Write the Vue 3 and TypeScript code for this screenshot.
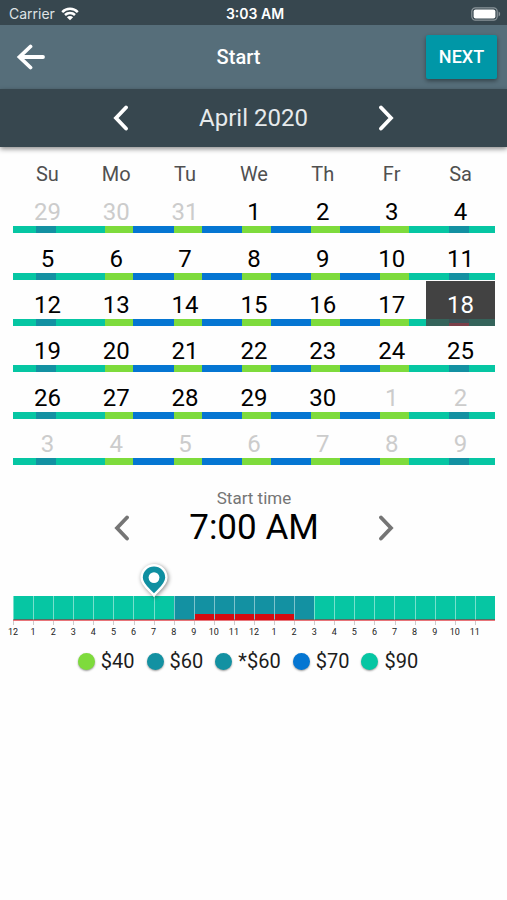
<script setup lang="ts">
import { computed, ref } from 'vue'

type Rate = 'low' | 'mid' | 'high' | 'peak'

interface Span {
  rate: Rate
  hours: number
}

interface Day {
  key: string
  label: number
  inMonth: boolean
  spans: Span[]
}

const weekend: Span[] = [
  { rate: 'peak', hours: 8 },
  { rate: 'mid', hours: 7 },
  { rate: 'peak', hours: 9 },
]
const monday: Span[] = [
  { rate: 'peak', hours: 8 },
  { rate: 'low', hours: 10 },
  { rate: 'high', hours: 6 },
]
const midweek: Span[] = [
  { rate: 'high', hours: 8 },
  { rate: 'low', hours: 10 },
  { rate: 'high', hours: 6 },
]
const friday: Span[] = [
  { rate: 'high', hours: 8 },
  { rate: 'low', hours: 10 },
  { rate: 'peak', hours: 6 },
]
const weekPattern = [weekend, monday, midweek, midweek, midweek, friday, weekend]
const weekdays = ['Su', 'Mo', 'Tu', 'We', 'Th', 'Fr', 'Sa']

const weeks = computed<Day[][]>(() =>
  Array.from({ length: 6 }, (_, w) =>
    Array.from({ length: 7 }, (_, d) => {
      const date = new Date(2020, 2, 29 + w * 7 + d)
      return {
        key: `${date.getMonth()}-${date.getDate()}`,
        label: date.getDate(),
        inMonth: date.getMonth() === 3,
        spans: weekPattern[d],
      }
    }),
  ),
)

const selected = ref('3-18')
const startHour = ref(7)

const clock = (h: number) => h % 12 || 12
const timeText = computed(() => `${clock(startHour.value)}:00 ${startHour.value < 12 ? 'AM' : 'PM'}`)
const shiftHour = (step: number) => {
  startHour.value = (startHour.value + step + 24) % 24
}

const hours = Array.from({ length: 24 }, (_, h) => ({
  hour: h,
  label: clock(h),
  rate: (h >= 8 && h < 15 ? 'mid' : 'peak') as Rate,
  busy: h >= 9 && h < 14,
}))

const legend: { rate: Rate; text: string }[] = [
  { rate: 'low', text: '$40' },
  { rate: 'mid', text: '$60' },
  { rate: 'mid', text: '*$60' },
  { rate: 'high', text: '$70' },
  { rate: 'peak', text: '$90' },
]
</script>

<template>
  <main class="screen">
    <div class="status">
      <span class="carrier">
        Carrier
        <svg class="wifi" viewBox="0 0 18 14" aria-hidden="true">
          <path d="M1.2 5.1a11 11 0 0 1 15.6 0" />
          <path d="M4 8a7.1 7.1 0 0 1 10 0" />
          <path class="solid" d="M9 13.2 5.9 10.2a4.4 4.4 0 0 1 6.2 0z" />
        </svg>
      </span>
      <span class="clock">3:03 AM</span>
      <svg class="battery" viewBox="0 0 30 14" aria-hidden="true">
        <rect class="shell" x="0.8" y="0.8" width="25.4" height="12.4" rx="3.6" />
        <rect class="charge" x="2.6" y="2.6" width="21.8" height="8.8" rx="2" />
        <path class="cap" d="M27.6 4.6a2.6 2.6 0 0 1 0 4.8z" />
      </svg>
    </div>

    <header class="toolbar">
      <button class="icon-button back" type="button" aria-label="Back">
        <svg viewBox="0 0 30 26"><path d="M14.5 2.5 3.5 13l11 10.5M4 13h23" /></svg>
      </button>
      <h1>Start</h1>
      <button class="next" type="button">NEXT</button>
    </header>

    <div class="month">
      <button class="icon-button" type="button" aria-label="Previous month">
        <svg viewBox="0 0 18 26"><path d="M14 2.5 4 13l10 10.5" /></svg>
      </button>
      <h2>April 2020</h2>
      <button class="icon-button" type="button" aria-label="Next month">
        <svg viewBox="0 0 18 26"><path d="M4 2.5 14 13 4 23.5" /></svg>
      </button>
    </div>

    <section class="content">
      <table class="calendar">
        <thead>
          <tr>
            <th v-for="d in weekdays" :key="d" scope="col">{{ d }}</th>
          </tr>
        </thead>
        <tbody>
          <tr v-for="(week, w) in weeks" :key="w">
            <td v-for="day in week" :key="day.key">
              <button
                type="button"
                class="day"
                :class="{ outside: !day.inMonth, selected: day.key === selected }"
                @click="selected = day.key"
              >
                <span class="number">{{ day.label }}</span>
                <span class="bar">
                  <span
                    v-for="(s, i) in day.spans"
                    :key="i"
                    :class="s.rate"
                    :style="{ flexGrow: s.hours }"
                  ></span>
                </span>
              </button>
            </td>
          </tr>
        </tbody>
      </table>

      <div class="time">
        <button class="icon-button" type="button" aria-label="Earlier" @click="shiftHour(-1)">
          <svg viewBox="0 0 18 26"><path d="M14 2.5 4 13l10 10.5" /></svg>
        </button>
        <div class="time-text">
          <span class="caption">Start time</span>
          <span class="value">{{ timeText }}</span>
        </div>
        <button class="icon-button" type="button" aria-label="Later" @click="shiftHour(1)">
          <svg viewBox="0 0 18 26"><path d="M4 2.5 14 13 4 23.5" /></svg>
        </button>
      </div>

      <div class="timeline">
        <svg
          class="pin"
          viewBox="0 0 36 40"
          :style="{ left: `${(startHour / 24) * 100}%` }"
          aria-hidden="true"
        >
          <path
            d="M18 33.2C14.6 28.6 5.6 23.4 5.6 15.6a12.4 12.4 0 0 1 24.8 0C30.4 23.4 21.4 28.6 18 33.2z"
          />
          <circle cx="18" cy="15.6" r="5.4" />
        </svg>
        <div class="hours">
          <div
            v-for="h in hours"
            :key="h.hour"
            class="hour"
            :class="[h.rate, { busy: h.busy }]"
          ></div>
        </div>
        <div class="labels">
          <span v-for="h in hours" :key="h.hour">{{ h.label }}</span>
        </div>
      </div>

      <ul class="legend">
        <li v-for="item in legend" :key="item.text">
          <span class="dot" :class="item.rate"></span>{{ item.text }}
        </li>
      </ul>
    </section>
  </main>
</template>

<style>
body {
  margin: 0;
  background: #fefefe;
}
</style>

<style scoped>
.screen {
  font-family: Roboto, sans-serif;
  color: #000;
}

button {
  font: inherit;
  color: inherit;
  border: 0;
  padding: 0;
  background: none;
  cursor: pointer;
}

h1,
h2,
ul {
  margin: 0;
  padding: 0;
}

.low {
  background: #7edb3c;
}
.mid {
  background: #1391a2;
}
.high {
  background: #0576d2;
}
.peak {
  background: #06c6a3;
}

.status {
  display: grid;
  grid-template-columns: 1fr auto 1fr;
  align-items: center;
  height: 25px;
  padding: 2px 6px 0 9px;
  box-sizing: border-box;
  background: #37474f;
  color: #fff;
  font-family: Inter, sans-serif;
  font-size: 14px;
}
.carrier {
  display: flex;
  align-items: center;
  gap: 6px;
  color: #dfe3e5;
}
.clock {
  font-weight: 600;
}
.wifi {
  width: 18px;
  height: 14px;
  fill: none;
  stroke: #fff;
  stroke-width: 2.5;
}
.wifi .solid {
  fill: #fff;
  stroke: none;
}
.battery {
  justify-self: end;
  width: 30px;
  height: 14px;
}
.battery .shell {
  fill: none;
  stroke: #8b959a;
  stroke-width: 1.2;
}
.battery .charge {
  fill: #fff;
}
.battery .cap {
  fill: #8b959a;
}

.icon-button {
  display: flex;
}
.icon-button svg {
  width: 18px;
  height: 26px;
  fill: none;
  stroke: currentColor;
  stroke-width: 3.8;
  stroke-linecap: round;
  stroke-linejoin: miter;
}

.toolbar {
  display: grid;
  grid-template-columns: 71px 1fr 71px;
  align-items: center;
  height: 64px;
  padding: 0 10px 0 16px;
  box-sizing: border-box;
  background: #566e7a;
  color: #fff;
}
.toolbar h1 {
  margin-right: 36px;
  font-size: 20px;
  font-weight: 500;
  line-height: 24px;
  text-align: center;
}
.back svg {
  width: 30px;
}
.next {
  height: 44px;
  padding-bottom: 2px;
  border-radius: 2px;
  background: #0097a7;
  font-size: 18px;
  font-weight: 500;
  box-shadow: 0 2px 4px rgba(0, 0, 0, 0.4);
}

.month {
  display: flex;
  align-items: center;
  justify-content: space-between;
  height: 58px;
  padding: 0 22%;
  background: #37474f;
  color: #fff;
  box-shadow: 0 2px 5px rgba(0, 0, 0, 0.45);
}
.month h2 {
  color: #e6eaec;
  font-size: 24px;
  font-weight: 400;
  line-height: 28px;
}

.content {
  padding: 0 12px 0 13px;
}

.calendar {
  width: 100%;
  height: 318px;
  table-layout: fixed;
  border-collapse: collapse;
}
.calendar th {
  height: 24px;
  padding: 15px 0 1px;
  color: #505050;
  font-size: 20px;
  font-weight: 400;
  line-height: 24px;
}
.calendar td {
  padding: 0;
  vertical-align: bottom;
}
.day {
  display: block;
  width: 100%;
  padding-top: 10px;
}
.number {
  display: block;
  font-size: 24px;
  line-height: 28px;
}
.outside .number {
  color: #ccc;
}
.bar {
  display: flex;
  height: 7px;
}
.bar span {
  flex-basis: 0;
}
.selected {
  background: #424242;
  color: #fff;
}
.selected .peak {
  background: #35635a;
}
.selected .mid {
  background: linear-gradient(#3a5359 4px, #7a3f49 4px);
}

.time {
  display: flex;
  align-items: center;
  justify-content: space-between;
  padding: 23px 100px 0;
}
.time .icon-button {
  margin-top: 20px;
  color: #757575;
}
.time-text {
  display: flex;
  flex-direction: column;
  align-items: center;
}
.caption {
  color: #757575;
  font-size: 17px;
  line-height: 20px;
}
.value {
  font-size: 35px;
  line-height: 40px;
}

.timeline {
  position: relative;
  padding-top: 48px;
}
.pin {
  position: absolute;
  top: 14px;
  width: 36px;
  height: 40px;
  margin-left: -18px;
  overflow: visible;
  fill: #0f8fa1;
  stroke: #fff;
  stroke-width: 2.4;
  filter: drop-shadow(1px 1px 2px rgba(0, 0, 0, 0.45));
}
.pin circle {
  fill: #fff;
  stroke: none;
}
.hours {
  display: flex;
  border-bottom: 1px solid #e9757a;
}
.hour {
  flex: 1 1 0;
  height: 24px;
  box-sizing: border-box;
  border-left: 1px solid rgba(255, 255, 255, 0.45);
  border-bottom: 1px solid #5c6b62;
}
.hour.busy {
  border-bottom-color: #d40b10;
  box-shadow: inset 0 -5px #d40b10;
}
/* Shifted by half an hour so each label is centred on its hour line. */
.labels {
  display: flex;
  margin: 0 10px 0 -10px;
}
.labels span {
  position: relative;
  flex: 1 1 0;
  padding-top: 6px;
  color: #222;
  font-size: 9px;
  line-height: 10px;
  text-align: center;
}
.labels span::before {
  content: '';
  position: absolute;
  top: 0;
  left: 50%;
  width: 1px;
  height: 4px;
  background: #ccc;
}

.legend {
  display: flex;
  justify-content: center;
  gap: 12px;
  padding: 12px 12px 0 0;
  list-style: none;
}
.legend li {
  display: flex;
  align-items: center;
  gap: 6px;
  color: #1c1c1c;
  font-size: 20px;
  line-height: 24px;
}
.dot {
  width: 17px;
  height: 17px;
  border-radius: 50%;
  box-shadow: 0 1px 2px rgba(0, 0, 0, 0.4);
}
</style>
